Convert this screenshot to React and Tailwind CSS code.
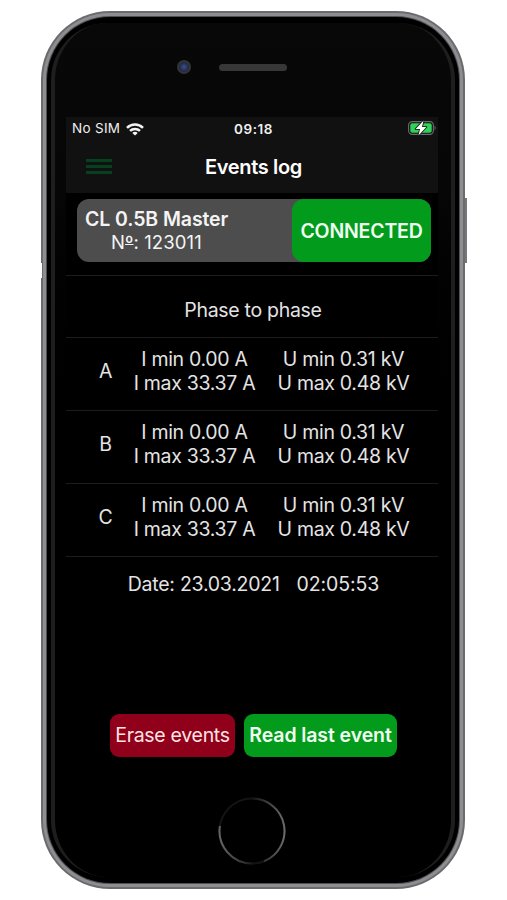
const phases = ['A', 'B', 'C'];

function WifiIcon() {
  return (
    <svg width="18" height="13" viewBox="0 0 18 13" fill="none" stroke="#f4f4f4" strokeWidth="2.5">
      <path d="M1 4.8C5.5 0.4 12.5 0.4 17 4.8" />
      <path d="M4 7.9C6.8 5.2 11.2 5.2 14 7.9" />
      <path d="M9 12.6L6.3 9.9C7.8 8.5 10.2 8.5 11.7 9.9Z" fill="#f4f4f4" stroke="none" />
    </svg>
  );
}

function BatteryIcon() {
  return (
    <svg width="28" height="16" viewBox="0 0 28 16">
      <rect x="0.6" y="1.6" width="24.8" height="12.8" rx="3.6" fill="#111" stroke="#6c6c6c" strokeWidth="1.1" />
      <rect x="2.3" y="3.3" width="21.4" height="9.4" rx="2" fill="#30d158" />
      <path d="M26.6 5.8C28 6.4 28 9.6 26.6 10.2Z" fill="#6c6c6c" />
      <path
        d="M15.6 0.6L7.6 8.9H12L10.4 15.4L18.4 7H14Z"
        fill="#fff"
        stroke="#111"
        strokeWidth="1.6"
        paintOrder="stroke"
        strokeLinejoin="round"
      />
    </svg>
  );
}

function StatusBar() {
  return (
    <div className="grid h-[22px] grid-cols-3 items-center pl-[6px] pr-[2px] text-[13.5px] leading-none text-[#f0f0f0]">
      <div className="flex items-center gap-[6px] pt-[2px]">
        <span className="whitespace-nowrap tracking-[0.3px]">No SIM</span>
        <WifiIcon />
      </div>
      <span className="pr-[1px] pt-[3px] text-center font-semibold tracking-[0.6px]">09:18</span>
      <div className="flex justify-end">
        <BatteryIcon />
      </div>
    </div>
  );
}

function NavBar() {
  return (
    <div className="relative flex h-[54px] items-center justify-center">
      <button className="absolute left-[20px] top-[20px] flex w-[26px] flex-col gap-[3px]" aria-label="Menu">
        <span className="h-[3px] bg-[#07401f]" />
        <span className="h-[3px] bg-[#07401f]" />
        <span className="h-[3px] bg-[#07401f]" />
      </button>
      <h1 className="pl-[3px] pt-[2px] text-[20px] font-semibold leading-none tracking-[-0.35px] text-white">
        Events log
      </h1>
    </div>
  );
}

function DeviceCard() {
  return (
    <div className="ml-[11px] mr-[7px] mt-[6px] flex h-[63px] rounded-[12px] bg-[#4d4d4d]">
      <div className="flex flex-1 flex-col pl-[8px] pt-[8px] text-[19.5px] leading-[24px] text-[#f4f4f4]">
        <span className="whitespace-nowrap font-semibold tracking-[-0.1px]">CL 0.5B Master</span>
        <span className="whitespace-nowrap pl-[26px] text-[18.5px] leading-[23px] tracking-[0.1px]">
          N<span className="underline decoration-1 underline-offset-[-5px] [text-decoration-skip-ink:none]">º</span>: 123011
        </span>
      </div>
      <div className="flex w-[139px] items-center justify-center rounded-[12px] bg-[#039b1c] text-[19.5px] font-semibold tracking-[-0.2px] text-[#effff0]">
        CONNECTED
      </div>
    </div>
  );
}

function PhaseRow({ name }) {
  return (
    <div className="flex h-[73px] items-center border-b border-[#1c1c1c] pb-[6px]">
      <span className="ml-[20px] w-[39px] text-center">{name}</span>
      <div className="ml-[3px] w-[133px] whitespace-nowrap text-center">
        <div>I min 0.00 A</div>
        <div>I max 33.37 A</div>
      </div>
      <div className="ml-[10px] w-[145px] whitespace-nowrap text-center">
        <div>U min 0.31 kV</div>
        <div>U max 0.48 kV</div>
      </div>
    </div>
  );
}

function Screen() {
  return (
    <div className="ml-[14px] flex h-[664px] w-[372px] flex-col bg-black text-[19.5px] leading-[24px] tracking-[-0.3px] text-[#e4e4e4]">
      <div className="bg-[#111111]">
        <StatusBar />
        <NavBar />
      </div>
      <DeviceCard />
      <div className="mt-[13px] flex h-[63px] items-center justify-center border-y border-[#1c1c1c] pl-[2px] pt-[7px]">
        <span className="whitespace-nowrap">Phase to phase</span>
      </div>
      {phases.map((name) => (
        <PhaseRow key={name} name={name} />
      ))}
      <div className="mt-[15px] flex justify-center gap-[17px] whitespace-nowrap pl-[3px]">
        <span className="tracking-[-0.25px]">Date: 23.03.2021</span>
        <span className="tracking-[-0.1px]">02:05:53</span>
      </div>
      <div className="mt-[118px] flex h-[43px] gap-[9px] pl-[44px]">
        <button className="w-[125px] whitespace-nowrap rounded-[9px] bg-[#90001a] pb-[2px] text-[#ffe4e4]">
          Erase events
        </button>
        <button className="w-[153px] whitespace-nowrap rounded-[9px] bg-[#039b1c] pb-[2px] font-semibold tracking-[-0.1px] text-[#effff0]">
          Read last event
        </button>
      </div>
    </div>
  );
}

export default function App() {
  return (
    <div className="h-[900px] w-[507px] overflow-hidden bg-white pl-[41px] pt-[11px] font-['Inter','Liberation_Sans',sans-serif]">
      {/* Metal rim */}
      <div className="relative h-[878px] w-[424px] rounded-[69px] bg-[#6b6b6e] p-[2px]">
        <div className="absolute -right-[2px] top-[187px] h-[65px] w-[2px] bg-[#77777b]" />
        <div className="absolute left-0 top-[252px] h-[15px] w-[1px] bg-white" />
        <div className="h-full rounded-[67px] bg-[#8d8e92] p-[3px]">
          <div className="h-full rounded-[64px] bg-[#505053] p-[1px]">
            {/* Glass front */}
            <div className="relative h-full rounded-[63px] bg-black px-[5px] pt-[1px]">
              <div className="absolute inset-x-[4px] inset-y-[6px] rounded-[57px] border-x-4 border-[#1e1e1e] bg-linear-to-b from-[#080808] from-0% via-[#060606] via-20% to-black to-50%" />
              <div className="relative flex h-[99px] items-start pl-[125px] pt-[42px]">
                <div className="flex size-[14px] items-center justify-center rounded-full bg-[#353535]">
                  <div className="size-[10px] rounded-full bg-radial from-[#3c5089] to-[#11172c]" />
                </div>
                <div className="ml-[28px] mt-[4px] h-[7px] w-[68px] rounded-full bg-[#373737]" />
              </div>
              <div className="relative">
                <Screen />
              </div>
              <svg className="relative mx-auto mt-[15px] block" width="70" height="70" viewBox="0 0 70 70" fill="none">
                <defs>
                  <linearGradient id="leftArc" x1="0" y1="0.6" x2="1" y2="0.4">
                    <stop offset="0" stopColor="#6a6a6a" />
                    <stop offset="1" stopColor="#101010" />
                  </linearGradient>
                  <linearGradient id="rightArc" x1="0" y1="0" x2="1" y2="0">
                    <stop offset="0" stopColor="#141414" />
                    <stop offset="1" stopColor="#6a6a6a" />
                  </linearGradient>
                </defs>
                <circle cx="34" cy="35" r="32.5" stroke="#141414" strokeWidth="2" />
                <path d="M1.9 30A32.5 32.5 0 0 0 34 67.5" stroke="url(#leftArc)" strokeWidth="2" />
                <path d="M34 2.5A32.5 32.5 0 0 1 46 65.2" stroke="url(#rightArc)" strokeWidth="2" />
              </svg>
            </div>
          </div>
        </div>
      </div>
    </div>
  );
}
